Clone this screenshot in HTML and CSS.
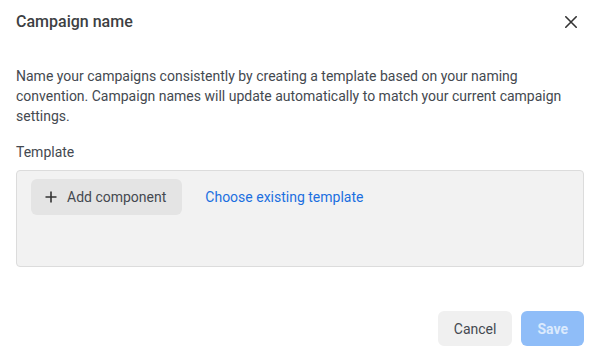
FILE: index.html
```html
<!DOCTYPE html>
<html lang="en">
<head>
    <meta charset="UTF-8">
    <meta name="viewport" content="width=device-width, initial-scale=1.0">
    <title>Campaign name</title>
    <link rel="stylesheet" href="styles.css">
</head>
<body>

    <div class="dialog">
        <div class="dialog-header">
            <h2 class="dialog-title">Campaign name</h2>
            <button class="close-btn" aria-label="Close">
                <svg width="12" height="12" viewBox="0 0 12 12">
                    <path d="M0.8 0.8 L11.2 11.2 M11.2 0.8 L0.8 11.2" stroke="#333" stroke-width="1.6" stroke-linecap="round"/>
                </svg>
            </button>
        </div>

        <div class="dialog-body">
            <p class="intro">Name your campaigns consistently by creating a template based on your naming convention. Campaign names will update automatically to match your current campaign settings.</p>

            <div class="field-label">Template</div>
            <div class="template-box">
                <button class="add-btn">
                    <svg width="12" height="12" viewBox="0 0 12 12">
                        <path d="M6 0.5 V11.5 M0.5 6 H11.5" stroke="#333" stroke-width="1.6"/>
                    </svg>
                    Add component
                </button>
                <a class="link" href="#">Choose existing template</a>
            </div>
        </div>

        <div class="dialog-footer">
            <button class="btn btn-cancel">Cancel</button>
            <button class="btn btn-save" disabled>Save</button>
        </div>
    </div>

</body>
</html>
```

FILE: styles.css
```css
body {
    margin: 0;
    background: #fff;
    font-family: Roboto, "Liberation Sans", Arial, sans-serif;
    font-size: 14px;
    color: #444950;
}
.dialog {
    width: 598px;
    height: 353px;
}
.dialog-header {
    display: flex;
    align-items: center;
    justify-content: space-between;
    padding: 12px 21px 12px 16px;
    height: 20px;
}
.dialog-title {
    margin: 0;
    font-size: 16px;
    font-weight: 500;
    line-height: 20px;
    color: #3d3f43;
}
.close-btn {
    border: none;
    background: none;
    padding: 0;
    width: 12px;
    height: 12px;
    display: flex;
    cursor: pointer;
}
.dialog-body {
    padding: 22px 14px 0 16px;
}
.intro {
    margin: 0 0 16px;
    line-height: 20px;
}
.field-label {
    line-height: 20px;
    margin-bottom: 8px;
}
.template-box {
    box-sizing: border-box;
    height: 97px;
    border: 1px solid #dcdcdc;
    border-radius: 4px;
    background: #f2f2f2;
    padding: 8px 14px;
    display: flex;
    align-items: flex-start;
    gap: 23px;
}
.add-btn {
    display: flex;
    align-items: center;
    gap: 10px;
    height: 36px;
    padding: 0 16px 0 14px;
    border: none;
    border-radius: 6px;
    background: #e4e4e4;
    font-family: inherit;
    font-size: 14px;
    color: #444950;
    cursor: pointer;
}
.link {
    line-height: 36px;
    color: #1b6fe0;
    text-decoration: none;
}
.dialog-footer {
    display: flex;
    justify-content: flex-end;
    gap: 9px;
    margin-top: 44px;
    padding-right: 14px;
}
.btn {
    height: 35px;
    border: none;
    border-radius: 6px;
    font-family: inherit;
    font-size: 14px;
    cursor: pointer;
}
.btn-cancel {
    padding: 0 16px;
    background: #f0f0f0;
    color: #444950;
}
.btn-save {
    padding: 0 16px;
    background: #8fbdf8;
    color: #dbeafd;
    font-weight: bold;
    cursor: default;
}
```
